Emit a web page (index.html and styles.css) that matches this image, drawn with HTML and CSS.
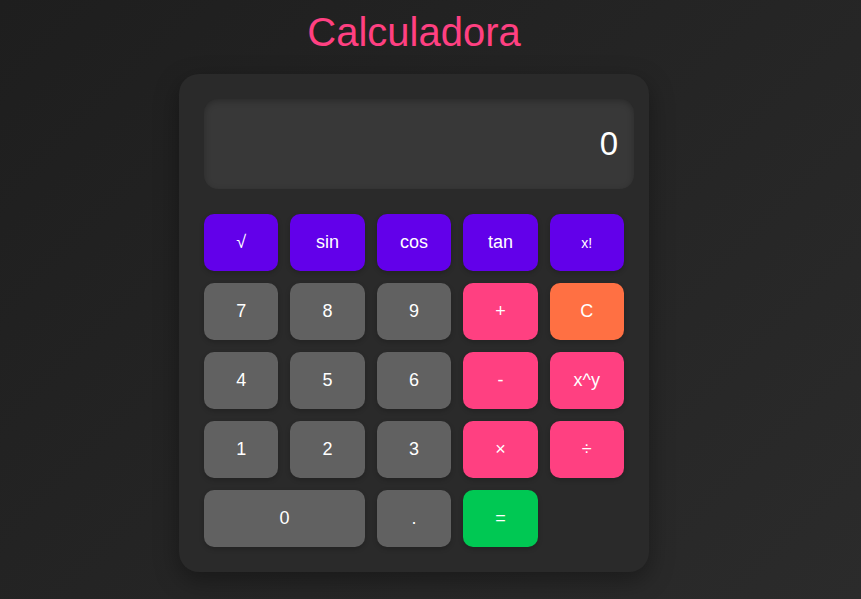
FILE: index.html
```html
<!DOCTYPE html>
<html lang="es">
<head>
<meta charset="utf-8">
<title>Calculadora</title>
<link rel="stylesheet" href="styles.css">
</head>
<body>
<main class="app">
  <h1 class="title">Calculadora</h1>
  <div class="calculator">
    <div class="display">0</div>
    <div class="keys">
      <button class="key fn">√</button>
      <button class="key fn">sin</button>
      <button class="key fn">cos</button>
      <button class="key fn">tan</button>
      <button class="key fn small">x!</button>

      <button class="key num">7</button>
      <button class="key num">8</button>
      <button class="key num">9</button>
      <button class="key op">+</button>
      <button class="key clear">C</button>

      <button class="key num">4</button>
      <button class="key num">5</button>
      <button class="key num">6</button>
      <button class="key op">-</button>
      <button class="key op">x^y</button>

      <button class="key num">1</button>
      <button class="key num">2</button>
      <button class="key num">3</button>
      <button class="key op">×</button>
      <button class="key op">÷</button>

      <button class="key num wide">0</button>
      <button class="key num">.</button>
      <button class="key eq">=</button>
    </div>
  </div>
</main>
</body>
</html>
```
FILE: styles.css
```css
* { box-sizing: border-box; }

html, body {
  margin: 0;
  height: 100%;
}

body {
  background: linear-gradient(135deg, #1e1e1e 0%, #2b2b2b 100%);
  font-family: "Liberation Sans", Arial, sans-serif;
  color: #fff;
}

.app {
  width: 828px;
  display: flex;
  flex-direction: column;
  align-items: center;
}

.title {
  margin: 9px 0 19px;
  font-size: 40px;
  font-weight: 400;
  line-height: 46px;
  color: #ff4081;
}

.calculator {
  width: 470px;
  padding: 25px;
  background: #2a2a2a;
  border-radius: 20px;
  box-shadow: 0 8px 24px rgba(0, 0, 0, 0.35);
}

.display {
  width: 430px;
  height: 90px;
  margin-bottom: 25px;
  padding: 0 16px;
  display: flex;
  align-items: center;
  justify-content: flex-end;
  background: #383838;
  border-radius: 14px;
  box-shadow: inset 0 2px 6px rgba(0, 0, 0, 0.25);
  font-size: 33px;
  color: #fff;
}

.keys {
  display: grid;
  grid-template-columns: repeat(5, 1fr);
  gap: 12px 12px;
}

.key {
  height: 57px;
  border: none;
  border-radius: 10px;
  font-family: "Liberation Sans", Arial, sans-serif;
  font-size: 18px;
  color: #fff;
  box-shadow: 0 2px 5px rgba(0, 0, 0, 0.2);
  cursor: pointer;
}

.fn { background: #6200ea; }
.num { background: #616161; }
.op { background: #ff4081; }
.clear { background: #ff7043; }
.eq { background: #00c853; }
.small { font-size: 14px; }
.wide { grid-column: span 2; }
```
